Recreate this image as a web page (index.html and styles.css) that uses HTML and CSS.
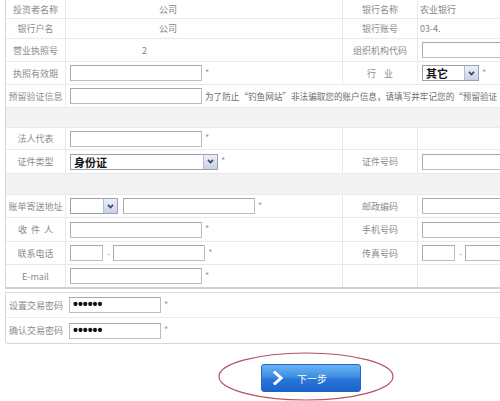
FILE: index.html
```html
<!DOCTYPE html>
<html lang="zh-CN">
<head>
<meta charset="utf-8">
<title>开户信息</title>
<link rel="stylesheet" href="styles.css">
</head>
<body>
<div class="page">
  <div class="info">
    <div class="row h19">
      <div class="cell lab">投资者名称</div>
      <div class="cell val"><span class="txt-mid">公司</span></div>
      <div class="cell lab">银行名称</div>
      <div class="cell val2"><span class="txt-r">农业银行</span></div>
    </div>
    <div class="row h20">
      <div class="cell lab">银行户名</div>
      <div class="cell val"><span class="txt-mid">公司</span></div>
      <div class="cell lab">银行账号</div>
      <div class="cell val2"><span class="txt-r">03-4.</span></div>
    </div>
    <div class="row h23">
      <div class="cell lab">营业执照号</div>
      <div class="cell val"><span class="txt-num">2</span></div>
      <div class="cell lab">组织机构代码</div>
      <div class="cell val2"><input class="inp w-r" type="text"></div>
    </div>
    <div class="row h23">
      <div class="cell lab">执照有效期</div>
      <div class="cell val"><input class="inp w132" type="text"><span class="req">*</span></div>
      <div class="cell lab">行&nbsp;&nbsp;&nbsp;&nbsp;业</div>
      <div class="cell val2">
        <div class="sel w57"><span class="sel-text">其它</span><span class="sel-btn"><svg viewBox="0 0 8 6"><polyline points="1,1 4,4.3 7,1"/></svg></span></div><span class="req">*</span>
      </div>
    </div>
    <div class="row h23">
      <div class="cell lab">预留验证信息</div>
      <div class="cell wide"><input class="inp w132" type="text"><span class="note">为了防止“钓鱼网站”非法骗取您的账户信息，请填写并牢记您的“预留验证</span></div>
    </div>
    <div class="row gap h20"></div>
    <div class="row h22">
      <div class="cell lab">法人代表</div>
      <div class="cell val"><input class="inp w132" type="text"><span class="req">*</span></div>
      <div class="cell lab plain"></div>
      <div class="cell val2"></div>
    </div>
    <div class="row h24">
      <div class="cell lab">证件类型</div>
      <div class="cell val">
        <div class="sel w148"><span class="sel-text">身份证</span><span class="sel-btn"><svg viewBox="0 0 8 6"><polyline points="1,1 4,4.3 7,1"/></svg></span></div><span class="req">*</span>
      </div>
      <div class="cell lab">证件号码</div>
      <div class="cell val2"><input class="inp w-r" type="text"></div>
    </div>
    <div class="row gap h21"></div>
    <div class="row h23">
      <div class="cell lab">账单寄送地址</div>
      <div class="cell val">
        <div class="sel w48"><span class="sel-text"></span><span class="sel-btn"><svg viewBox="0 0 8 6"><polyline points="1,1 4,4.3 7,1"/></svg></span></div>
        <input class="inp w132 ml4" type="text"><span class="req">*</span>
      </div>
      <div class="cell lab">邮政编码</div>
      <div class="cell val2"><input class="inp w-r" type="text"></div>
    </div>
    <div class="row h24">
      <div class="cell lab">收&nbsp;&nbsp;件&nbsp;&nbsp;人</div>
      <div class="cell val"><input class="inp w132" type="text"><span class="req">*</span></div>
      <div class="cell lab">手机号码</div>
      <div class="cell val2"><input class="inp w-r" type="text"></div>
    </div>
    <div class="row h23">
      <div class="cell lab">联系电话</div>
      <div class="cell val"><input class="inp w33" type="text"><span class="dash">-</span><input class="inp w92" type="text"><span class="req">*</span></div>
      <div class="cell lab">传真号码</div>
      <div class="cell val2"><input class="inp w33" type="text"><span class="dash">-</span><input class="inp w-r" type="text"></div>
    </div>
    <div class="row h22 last">
      <div class="cell lab">E-mail</div>
      <div class="cell val"><input class="inp w132" type="text"><span class="req">*</span></div>
      <div class="cell lab plain"></div>
      <div class="cell val2"></div>
    </div>
  </div>

  <div class="pwd-box">
    <div class="prow">
      <div class="plab">设置交易密码</div>
      <div class="pval"><div class="pwd">••••••</div><span class="req">*</span></div>
    </div>
    <div class="prow last">
      <div class="plab">确认交易密码</div>
      <div class="pval"><div class="pwd">••••••</div><span class="req">*</span></div>
    </div>
  </div>

  <div class="actions">
    <button class="next" type="button">
      <svg class="next-ico" viewBox="0 0 10 14"><polyline points="2,1.5 8,7 2,12.5"/></svg>
      <span class="next-txt">下一步</span>
    </button>
    <svg class="ring" viewBox="0 0 178 50"><ellipse cx="89" cy="24.5" rx="87" ry="23.5"/></svg>
  </div>
</div>
</body>
</html>
```

FILE: styles.css
```css
html, body {
  margin: 0;
  padding: 0;
}
body {
  width: 500px;
  height: 401px;
  overflow: hidden;
  background: #fff;
  font-family: "Noto Sans CJK SC", "Noto Sans", sans-serif;
  font-size: 9px;
  color: #8a8a8a;
}
.page {
  width: 560px;
  padding-left: 5px;
}

/* main info table */
.info {
  border-left: 1px solid #d9d9d9;
  border-bottom: 2px solid #d0d0d0;
}
.row {
  display: grid;
  grid-template-columns: 60px 277px 75px 1fr;
  box-sizing: border-box;
  border-bottom: 1px solid #e9e9e9;
  background: #fff;
}
.row.last { border-bottom: 0; }
.row.gap { background: #f3f3f3; display: block; }
.h19 { height: 19px; }
.h20 { height: 20px; }
.h21 { height: 21px; }
.h22 { height: 22px; }
.h23 { height: 23px; }
.h24 { height: 24px; }

.cell {
  display: flex;
  align-items: center;
  box-sizing: border-box;
  border-right: 1px solid #e9e9e9;
  min-width: 0;
  white-space: nowrap;
}
.lab {
  justify-content: center;
  color: #8c8c8c;
}
.val2 { border-right: 0; }
.wide {
  grid-column: span 3;
  border-right: 0;
  overflow: hidden;
}
.txt-mid { padding-left: 93px; color: #858585; }
.txt-num { padding-left: 76px; color: #858585; }
.txt-r { padding-left: 2px; color: #858585; }

/* fields */
.inp {
  display: block;
  box-sizing: border-box;
  height: 16px;
  margin: 0 0 0 4px;
  padding: 0;
  border: 1px solid #bdbdbd;
  border-top-color: #a8a8a8;
  border-left-color: #ababab;
  background: #fff;
  flex: none;
}
.w132 { width: 132px; }
.w92 { width: 92px; }
.w33 { width: 33px; }
.w-r { width: 110px; }
.ml4 { margin-left: 5px; }
.dash {
  margin-left: 4px;
  margin-right: -1px;
  color: #aaa;
}
.req {
  margin-left: 3px;
  color: #9a9a9a;
  font-size: 9px;
  position: relative;
  top: -1px;
}
.note {
  margin-left: 3px;
  font-size: 8.6px;
  color: #6e6e6e;
}

/* select imitation */
.sel {
  display: flex;
  flex: none;
  box-sizing: border-box;
  height: 16px;
  margin-left: 4px;
  border: 1px solid #9ca2ab;
  background: #fff;
}
.w148 { width: 148px; }
.w57 { width: 57px; }
.w48 { width: 48px; }
.sel-text {
  flex: 1;
  padding-left: 3px;
  font-size: 11px;
  font-weight: bold;
  color: #141414;
  line-height: 14px;
}
.sel-btn {
  width: 13px;
  display: flex;
  align-items: center;
  justify-content: center;
  background: linear-gradient(#eef0f8, #c9d0e2);
  border-left: 1px solid #b4bcd0;
}
.sel-btn svg {
  width: 7px;
  height: 5px;
  fill: none;
  stroke: #34456e;
  stroke-width: 2;
}

/* password box */
.pwd-box {
  margin-top: 3px;
  border: 1px solid #d6d6d6;
  border-right: 0;
  border-radius: 0 0 0 4px;
}
.prow {
  display: grid;
  grid-template-columns: 60px 1fr;
  height: 25px;
  box-sizing: border-box;
  border-bottom: 1px solid #ededed;
}
.prow.last { border-bottom: 0; }
.plab {
  display: flex;
  align-items: center;
  justify-content: center;
  color: #8c8c8c;
  white-space: nowrap;
}
.pval {
  display: flex;
  align-items: center;
}
.pwd {
  box-sizing: border-box;
  width: 92px;
  height: 16px;
  margin-left: 3px;
  padding-left: 3px;
  border: 1px solid #bdbdbd;
  border-top-color: #a8a8a8;
  font-family: "Liberation Sans", sans-serif;
  font-size: 14px;
  font-weight: bold;
  line-height: 13px;
  letter-spacing: 0;
  color: #111;
}

/* next button */
.actions {
  position: relative;
  height: 57px;
  padding-left: 256px;
  padding-top: 20px;
  box-sizing: border-box;
}
.next {
  display: flex;
  align-items: center;
  width: 100px;
  height: 28px;
  margin: 0;
  padding: 0;
  box-sizing: border-box;
  border: 1px solid #2563c4;
  border-radius: 3px;
  background: linear-gradient(#6ab3f2 0%, #3f8fe3 45%, #2a76d8 55%, #1c64cc 100%);
  cursor: pointer;
}
.next-ico {
  width: 10px;
  height: 14px;
  margin-left: 11px;
  fill: none;
  stroke: #fff;
  stroke-width: 3;
  stroke-linecap: square;
}
.next-txt {
  margin-left: 14px;
  font-family: "Noto Sans CJK SC", sans-serif;
  font-size: 10px;
  color: #fff;
}
.ring {
  position: absolute;
  left: 212px;
  top: 8px;
  width: 178px;
  height: 50px;
  fill: none;
  stroke: #b5525e;
  stroke-width: 1.2;
  pointer-events: none;
}
```
